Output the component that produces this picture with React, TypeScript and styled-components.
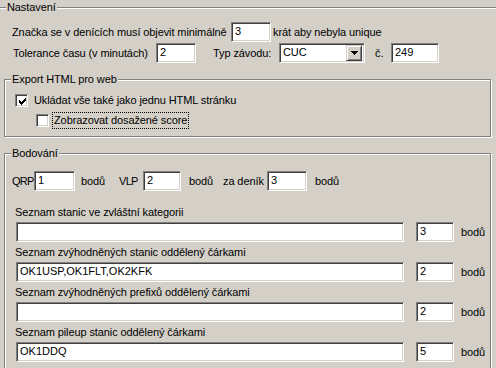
import React from 'react';
import styled, { createGlobalStyle, css } from 'styled-components';

const GlobalStyle = createGlobalStyle`
  html, body {
    margin: 0;
    padding: 0;
    background: #d4d0c8;
  }
  body {
    font-family: "Liberation Sans", Arial, sans-serif;
    font-size: 11px;
    letter-spacing: -0.1px;
    color: #000;
    overflow: hidden;
  }
`;

// classic win32 sunken edge
const sunken = css`
  box-sizing: border-box;
  border: 1px solid;
  border-color: #808080 #fff #fff #808080;
  box-shadow: inset 1px 1px 0 #404040, inset -1px -1px 0 #d4d0c8;
  background: #fff;
`;

const Page = styled.div`
  width: 496px;
  height: 368px;
  overflow: hidden;
  padding-top: 7px;
  box-sizing: border-box;
`;

const HeaderBox = styled.div`
  position: relative;
  margin-left: -2px;
  width: 520px;
  border-top: 1px solid #808080;
  box-shadow: inset 0 1px 0 #fff;
  padding: 14px 0 0 14px;
`;

const Group = styled.div<{ $h: number }>`
  position: relative;
  margin: 16px 0 0 4px;
  width: 487px;
  height: ${p => p.$h}px;
  box-sizing: border-box;
  border: 1px solid #808080;
  box-shadow: inset 1px 1px 0 #fff, 1px 1px 0 #fff;
`;

const Title = styled.span<{ $x: number }>`
  position: absolute;
  top: -7px;
  left: ${p => p.$x}px;
  padding: 0 1px;
  line-height: 13px;
  background: #d4d0c8;
  white-space: nowrap;
`;

const Row = styled.div<{ $mt?: number; $ml?: number }>`
  display: flex;
  align-items: center;
  height: 20px;
  margin-top: ${p => p.$mt || 0}px;
  margin-left: ${p => p.$ml || 0}px;
`;

const Caption = styled.span<{ $w?: number; $ml?: number; $tight?: boolean }>`
  flex: none;
  width: ${p => (p.$w ? p.$w + 'px' : 'auto')};
  margin-left: ${p => p.$ml || 0}px;
  white-space: nowrap;
  line-height: 13px;
  letter-spacing: ${p => (p.$tight ? '-0.7px' : 'inherit')};
`;

const Field = styled.input<{ $w: number; $ml?: number }>`
  ${sunken};
  flex: none;
  width: ${p => p.$w}px;
  height: 20px;
  margin: 0 0 0 ${p => p.$ml || 0}px;
  padding: 0 1px 3px 3px;
  font: inherit;
  color: #000;
  outline: none;
`;

const Combo = styled.div<{ $w: number }>`
  ${sunken};
  flex: none;
  display: flex;
  align-items: center;
  width: ${p => p.$w}px;
  height: 20px;
  padding: 0 2px 0 3px;
`;

const ComboText = styled.span`
  flex: 1;
  line-height: 13px;
  margin-top: -2px;
`;

const DropButton = styled.span`
  box-sizing: border-box;
  display: flex;
  align-items: center;
  justify-content: center;
  width: 16px;
  height: 16px;
  border: 1px solid;
  border-color: #d4d0c8 #404040 #404040 #d4d0c8;
  box-shadow: inset 1px 1px 0 #fff, inset -1px -1px 0 #808080;
  background: #d4d0c8;
`;

const ExportBody = styled.div`
  padding: 14px 0 0 10px;
`;

const CheckRow = styled.div<{ $mt?: number; $ml?: number }>`
  display: flex;
  align-items: center;
  height: 13px;
  margin-top: ${p => p.$mt || 0}px;
  margin-left: ${p => p.$ml || 0}px;
`;

const CheckBox = styled.span`
  ${sunken};
  flex: none;
  width: 13px;
  height: 13px;
  padding: 3px 0 0 3px;
  svg {
    display: block;
  }
`;

const CheckText = styled.span`
  margin-left: 6px;
  line-height: 13px;
  white-space: nowrap;
`;

const FocusText = styled.span`
  margin-left: 3px;
  padding: 1px;
  border: 1px dotted #000;
  line-height: 13px;
  white-space: nowrap;
`;

const ScoreBody = styled.div`
  padding: 17px 0 0 8px;
`;

const ListBlock = styled.div<{ $mt?: number }>`
  margin: ${p => p.$mt || 0}px 0 1px 2px;
`;

const ListLabel = styled.div`
  height: 19px;
  line-height: 19px;
  white-space: nowrap;
`;

const checkCols = [2, 3, 4, 3, 2, 1, 0];

function CheckMark() {
  return (
    <svg width="7" height="7" viewBox="0 0 7 7" shapeRendering="crispEdges">
      {checkCols.map((t, i) => (
        <rect key={i} x={i} y={t} width="1" height="3" fill="#000" />
      ))}
    </svg>
  );
}

function Check({ checked }: { checked?: boolean }) {
  return <CheckBox>{checked && <CheckMark />}</CheckBox>;
}

function DownArrow() {
  return (
    <svg width="7" height="4" viewBox="0 0 7 4" shapeRendering="crispEdges">
      <rect x="0" y="0" width="7" height="1" fill="#000" />
      <rect x="1" y="1" width="5" height="1" fill="#000" />
      <rect x="2" y="2" width="3" height="1" fill="#000" />
      <rect x="3" y="3" width="1" height="1" fill="#000" />
    </svg>
  );
}

const lists = [
  { label: 'Seznam stanic ve zvláštní kategorii', value: '', points: '3' },
  { label: 'Seznam zvýhodněných stanic oddělený čárkami', value: 'OK1USP,OK1FLT,OK2KFK', points: '2' },
  { label: 'Seznam zvýhodněných prefixů oddělený čárkami', value: '', points: '2' },
  { label: 'Seznam pileup stanic oddělený čárkami', value: 'OK1DDQ', points: '5' },
];

export default function App() {
  return (
    <>
      <GlobalStyle />
      <Page>
        <HeaderBox>
          <Title $x={8}>Nastavení</Title>
          <Row>
            <Caption $w={219}>Značka se v denících musí objevit minimálně</Caption>
            <Field $w={40} defaultValue="3" />
            <Caption $ml={2}>krát aby nebyla unique</Caption>
          </Row>
          <Row $mt={1} $ml={1}>
            <Caption $w={143}>Tolerance času (v minutách)</Caption>
            <Field $w={40} defaultValue="2" />
            <Caption $w={66} $ml={17}>Typ závodu:</Caption>
            <Combo $w={86}>
              <ComboText>CUC</ComboText>
              <DropButton>
                <DownArrow />
              </DropButton>
            </Combo>
            <Caption $w={16} $ml={10}>č.</Caption>
            <Field $w={48} defaultValue="249" />
          </Row>
        </HeaderBox>

        <Group $h={58}>
          <Title $x={6}>Export HTML pro web</Title>
          <ExportBody>
            <CheckRow>
              <Check checked />
              <CheckText>Ukládat vše také jako jednu HTML stránku</CheckText>
            </CheckRow>
            <CheckRow $mt={7} $ml={21}>
              <Check />
              <FocusText>Zobrazovat dosažené score</FocusText>
            </CheckRow>
          </ExportBody>
        </Group>

        <Group $h={240}>
          <Title $x={6}>Bodování</Title>
          <ScoreBody>
            <Row>
              <Caption $w={22} $ml={-1} $tight>QRP</Caption>
              <Field $w={41} defaultValue="1" />
              <Caption $w={38} $ml={6}>bodů</Caption>
              <Caption $w={24} $tight>VLP</Caption>
              <Field $w={38} defaultValue="2" />
              <Caption $w={34} $ml={8}>bodů</Caption>
              <Caption $w={44}>za deník</Caption>
              <Field $w={40} defaultValue="3" />
              <Caption $ml={8}>bodů</Caption>
            </Row>
            {lists.map((l, i) => (
              <ListBlock key={l.label} $mt={i === 0 ? 12 : 0}>
                <ListLabel>{l.label}</ListLabel>
                <Row $ml={1}>
                  <Field $w={388} defaultValue={l.value} />
                  <Field $w={38} $ml={12} defaultValue={l.points} />
                  <Caption $ml={7}>bodů</Caption>
                </Row>
              </ListBlock>
            ))}
          </ScoreBody>
        </Group>
      </Page>
    </>
  );
}
